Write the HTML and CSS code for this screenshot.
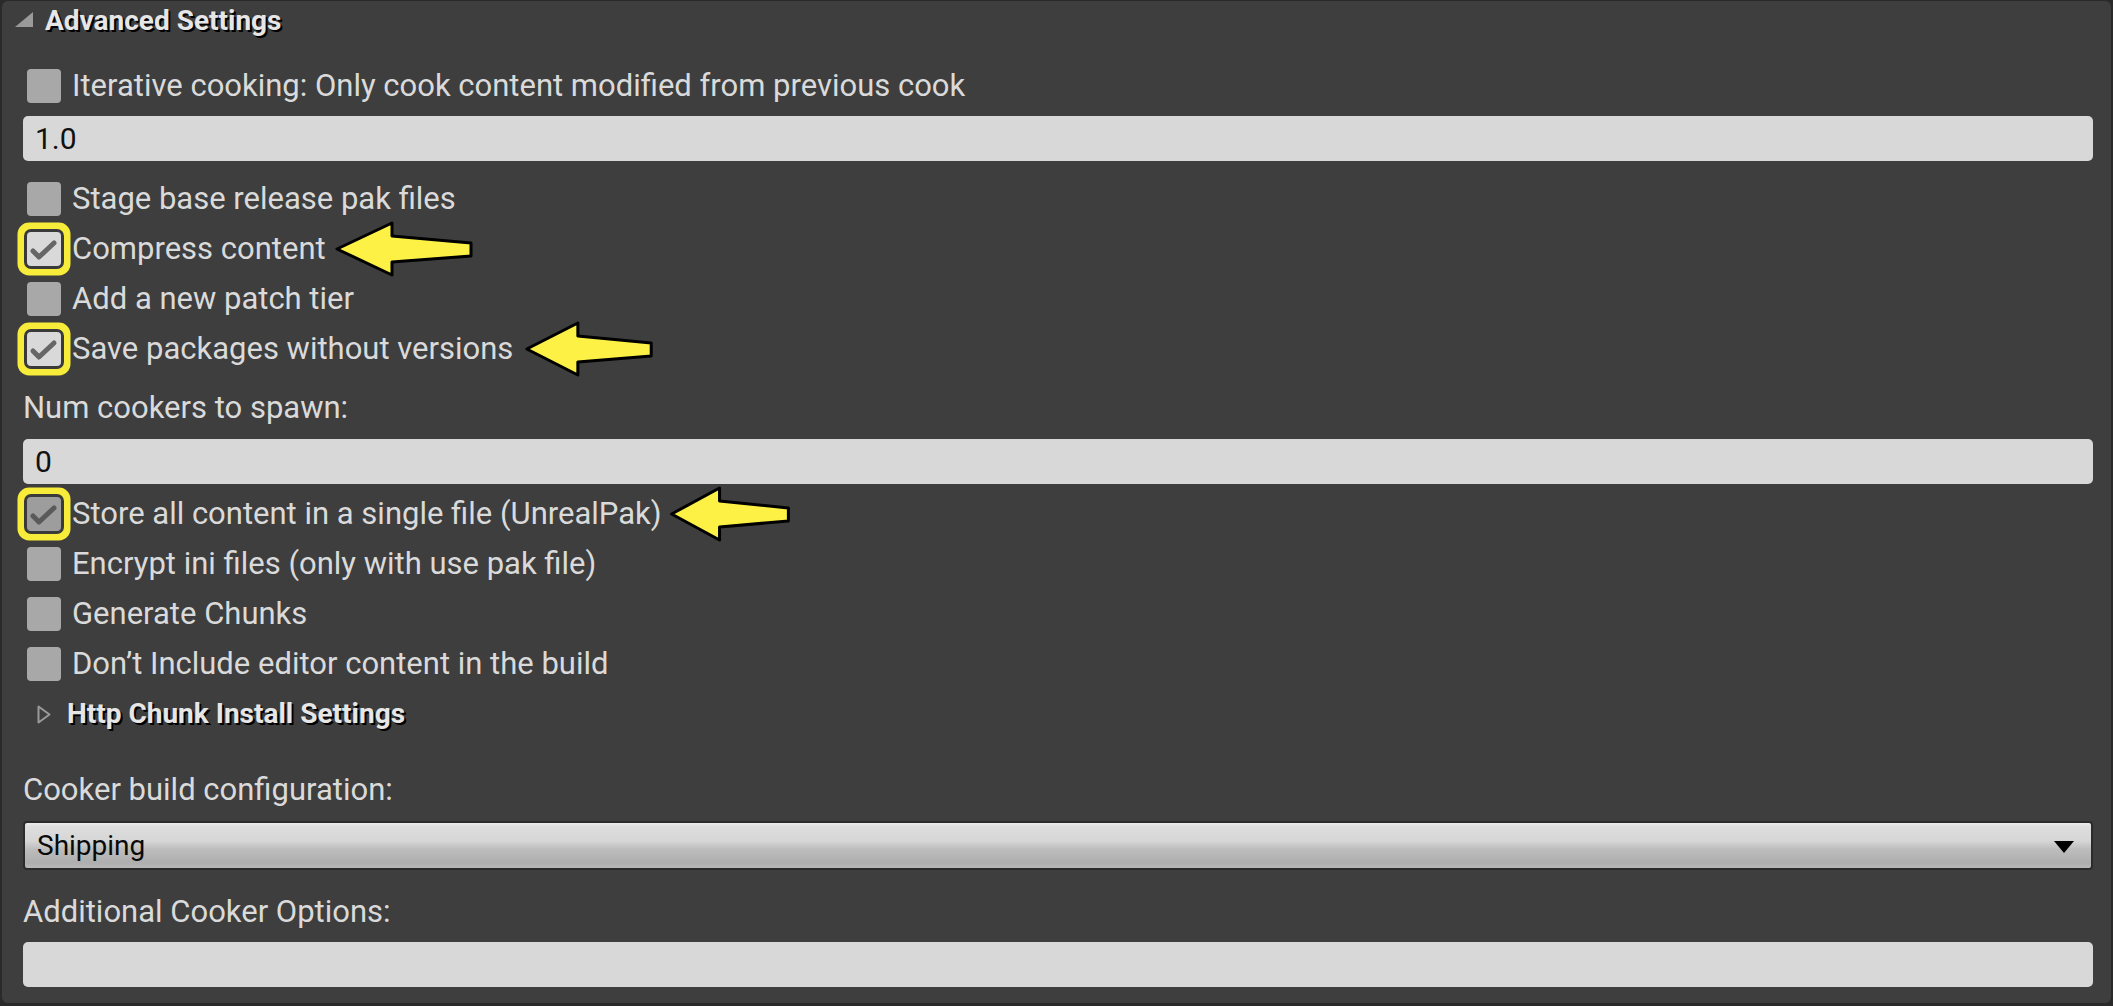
FILE: index.html
```html
<!DOCTYPE html>
<html>
<head>
<meta charset="utf-8">
<link rel="stylesheet" href="styles.css">
</head>
<body>
<div class="panel">
  <div class="header">
    <svg class="hdr-tri" width="18" height="15" viewBox="0 0 18 15"><polygon points="18,0 18,15 0,15" fill="#9a9a9a"/></svg>
    <span class="hdr-text">Advanced Settings</span>
  </div>
  <div class="content">
    <div class="row first">
      <span class="cb"></span><span class="lbl">Iterative cooking: Only cook content modified from previous cook</span>
    </div>
    <div class="field f1"><span class="val">1.0</span></div>

    <div class="row r-stage">
      <span class="cb"></span><span class="lbl">Stage base release pak files</span>
    </div>
    <div class="row">
      <span class="cb checked hl"><svg class="tick" viewBox="0 0 34 34"><path d="M6 19 L12 25 L27 11" fill="none" stroke="#666" stroke-width="5" stroke-linecap="round" stroke-linejoin="round"/></svg></span><span class="lbl">Compress content</span>
      <svg class="arrow a1" viewBox="0 0 140 58" preserveAspectRatio="none"><path d="M3 29 L58 3 L58 16 L137 23 L137 36 L58 42 L58 55 Z" fill="#fdf145" stroke="#000" stroke-width="3" stroke-linejoin="round" vector-effect="non-scaling-stroke"/></svg>
    </div>
    <div class="row">
      <span class="cb"></span><span class="lbl">Add a new patch tier</span>
    </div>
    <div class="row">
      <span class="cb checked hl"><svg class="tick" viewBox="0 0 34 34"><path d="M6 19 L12 25 L27 11" fill="none" stroke="#666" stroke-width="5" stroke-linecap="round" stroke-linejoin="round"/></svg></span><span class="lbl">Save packages without versions</span>
      <svg class="arrow a2" viewBox="0 0 140 58" preserveAspectRatio="none"><path d="M3 29 L58 3 L58 16 L137 23 L137 36 L58 42 L58 55 Z" fill="#fdf145" stroke="#000" stroke-width="3" stroke-linejoin="round" vector-effect="non-scaling-stroke"/></svg>
    </div>

    <div class="label l-num">Num cookers to spawn:</div>
    <div class="field f2"><span class="val">0</span></div>

    <div class="row r-store">
      <span class="cb checked dim hl"><svg class="tick" viewBox="0 0 34 34"><path d="M6 19 L12 25 L27 11" fill="none" stroke="#5a5a5a" stroke-width="5" stroke-linecap="round" stroke-linejoin="round"/></svg></span><span class="lbl">Store all content in a single file (UnrealPak)</span>
      <svg class="arrow a3" viewBox="0 0 140 58" preserveAspectRatio="none"><path d="M3 29 L58 3 L58 16 L137 23 L137 36 L58 42 L58 55 Z" fill="#fdf145" stroke="#000" stroke-width="3" stroke-linejoin="round" vector-effect="non-scaling-stroke"/></svg>
    </div>
    <div class="row">
      <span class="cb"></span><span class="lbl">Encrypt ini files (only with use pak file)</span>
    </div>
    <div class="row">
      <span class="cb"></span><span class="lbl">Generate Chunks</span>
    </div>
    <div class="row">
      <span class="cb"></span><span class="lbl">Don’t Include editor content in the build</span>
    </div>
    <div class="row sub">
      <svg class="sub-tri" width="14" height="19" viewBox="0 0 14 19"><polygon points="1.5,1.5 12.5,9.5 1.5,17.5" fill="none" stroke="#9a9a9a" stroke-width="2" stroke-linejoin="round"/></svg>
      <span class="sub-text">Http Chunk Install Settings</span>
    </div>

    <div class="label l-cooker">Cooker build configuration:</div>
    <div class="combo">
      <span class="combo-text">Shipping</span>
      <svg class="combo-arrow" width="20" height="12" viewBox="0 0 20 12"><polygon points="0,0 20,0 10,12" fill="#000"/></svg>
    </div>
    <div class="label l-add">Additional Cooker Options:</div>
    <div class="field f3"></div>
  </div>
</div>
</body>
</html>
```

FILE: styles.css
```css
html, body {
  margin: 0;
  padding: 0;
}
body {
  background: #2a2a2a;
  font-family: Roboto, "Liberation Sans", sans-serif;
  width: 2113px;
  height: 1006px;
  overflow: hidden;
}
.panel {
  margin: 1px 2px 0 2px;
  height: 1002px;
  background: #3e3e3e;
  border-radius: 6px;
  padding: 0 18px 0 13px;
  box-sizing: border-box;
}
.header {
  height: 40px;
  display: flex;
  align-items: center;
}
.hdr-tri {
  display: block;
  margin-top: -4px;
}
.hdr-text {
  margin-left: 12px;
  font-weight: 700;
  font-size: 28px;
  line-height: 40px;
  color: #e6e6e6;
  text-shadow: 2px 2px 0 #000;
}
.content {
  padding-left: 8px;
  display: flex;
  flex-direction: column;
}
.row {
  height: 50px;
  display: flex;
  align-items: center;
  padding-left: 4px;
}
.row.first { margin-top: 20px; }
.row.r-stage { margin-top: 13px; }
.row.r-store { margin-top: 5px; }
.cb {
  width: 34px;
  height: 34px;
  flex: none;
  border-radius: 4px;
  background: #a8a8a8;
  position: relative;
}
.cb.checked {
  background: #d9d9d9;
}
.cb.checked.dim {
  background: #9d9d9d;
}
.cb.hl {
  box-shadow: 0 0 0 3px #3a3a3a, 0 0 0 9.5px #f8ec3a;
}
.tick {
  display: block;
  width: 34px;
  height: 34px;
}
.lbl {
  margin-left: 11px;
  font-size: 31px;
  line-height: 40px;
  color: #dadada;
  white-space: nowrap;
}
.arrow {
  height: 58px;
  flex: none;
  margin: -4px 0;
}
.a1 { width: 140px; margin-left: 8px; }
.a2 { width: 130px; margin-left: 11px; }
.a3 { width: 122px; margin-left: 7px; }
.field {
  height: 45px;
  background: #d8d8d8;
  border-radius: 5px;
  display: flex;
  align-items: center;
  padding-left: 12px;
}
.f1 { margin-top: 5px; }
.f2 { margin-top: 11px; }
.f3 { margin-top: 10px; }
.val {
  font-size: 30px;
  line-height: 40px;
  color: #111;
}
.label {
  font-size: 31px;
  line-height: 40px;
  color: #dadada;
  white-space: nowrap;
}
.l-num { margin-top: 14px; }
.l-cooker { margin-top: 31px; }
.l-add { margin-top: 22px; }
.sub {
  padding-left: 14px;
}
.sub-tri {
  display: block;
  flex: none;
}
.sub-text {
  margin-left: 16px;
  font-weight: 700;
  font-size: 28px;
  line-height: 40px;
  color: #e6e6e6;
  text-shadow: 2px 2px 0 #000;
  white-space: nowrap;
}
.combo {
  margin-top: 11px;
  height: 49px;
  box-sizing: border-box;
  border: 2px solid #2b2b2b;
  border-radius: 4px;
  background: linear-gradient(#ececec 0%, #dedede 8%, #d6d6d6 40%, #bdbdbd 58%, #aeaeae 88%, #b8b8b8 100%);
  display: flex;
  align-items: center;
  padding: 0 17px 0 12px;
}
.combo-text {
  flex: 1;
  font-size: 28px;
  line-height: 40px;
  color: #0a0a0a;
}
.combo-arrow {
  display: block;
  flex: none;
  margin-top: 2px;
}
```
